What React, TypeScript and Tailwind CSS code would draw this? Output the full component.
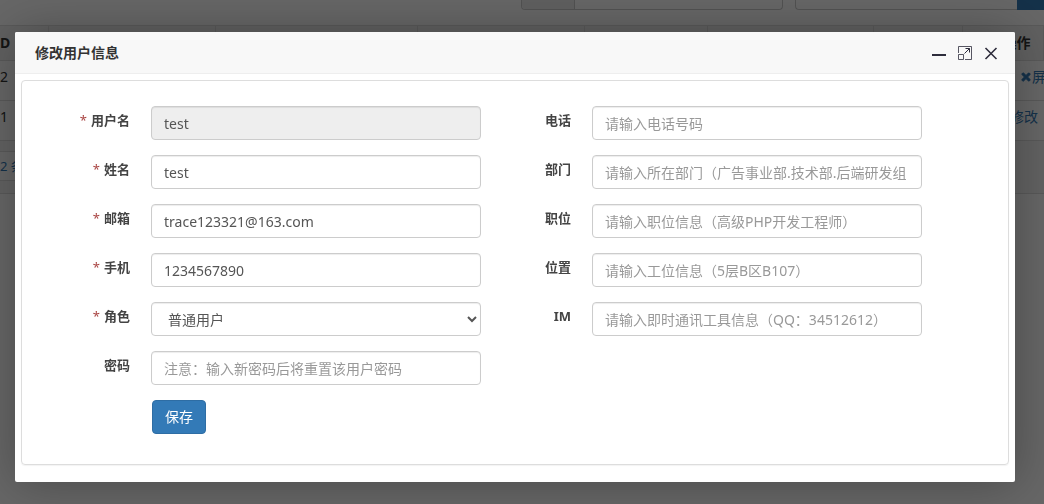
import React from 'react';
import { FaTimes } from 'react-icons/fa';

interface Field {
  id: string;
  label: string;
  required?: boolean;
  value?: string;
  placeholder?: string;
  disabled?: boolean;
  type?: 'text' | 'password' | 'select';
}

const accountFields: Field[] = [
  { id: 'username', label: '用户名', required: true, value: 'test', disabled: true },
  { id: 'name', label: '姓名', required: true, value: 'test' },
  { id: 'email', label: '邮箱', required: true, value: 'trace123321@163.com' },
  { id: 'mobile', label: '手机', required: true, value: '1234567890' },
  { id: 'role', label: '角色', required: true, type: 'select', value: '普通用户' },
  { id: 'password', label: '密码', type: 'password', placeholder: '注意：输入新密码后将重置该用户密码' },
];

const contactFields: Field[] = [
  { id: 'phone', label: '电话', placeholder: '请输入电话号码' },
  { id: 'department', label: '部门', placeholder: '请输入所在部门（广告事业部.技术部.后端研发组' },
  { id: 'position', label: '职位', placeholder: '请输入职位信息（高级PHP开发工程师）' },
  { id: 'location', label: '位置', placeholder: '请输入工位信息（5层B区B107）' },
  { id: 'im', label: 'IM', placeholder: '请输入即时通讯工具信息（QQ：34512612）' },
];

const controlClass =
  'h-[34px] w-full min-w-0 flex-1 rounded border border-[#ccc] bg-white px-3 text-sm text-[#555] placeholder:text-[#999] disabled:bg-[#eee] shadow-[inset_0_1px_1px_rgba(0,0,0,0.075)]';

const FormRow: React.FC<{ field: Field }> = ({ field }) => (
  <div className="flex">
    <label htmlFor={field.id} className="w-[111px] pr-[21px] pt-1 text-right text-[13px] leading-5 font-bold text-[#444]">
      {field.required && <span className="mr-1 font-normal text-[#a94442]">*</span>}
      {field.label}
    </label>
    {field.type === 'select' ? (
      <select id={field.id} className={controlClass} defaultValue={field.value}>
        <option>{field.value}</option>
      </select>
    ) : (
      <input
        id={field.id}
        type={field.type ?? 'text'}
        className={controlClass}
        defaultValue={field.value}
        placeholder={field.placeholder}
        disabled={field.disabled}
      />
    )}
  </div>
);

const UserListPage: React.FC = () => (
  <div className="overflow-hidden text-sm text-[#333]" aria-hidden="true">
    <div className="flex h-[25px] items-start pl-[521px]">
      <div className="flex h-[10px] w-[262px] rounded-b border border-t-0 border-[#ccc]">
        <div className="w-[53px] rounded-bl border-r border-[#ccc] bg-[#eee]" />
      </div>
      <div className="ml-3 h-[10px] w-[222px] rounded-bl border border-t-0 border-r-0 border-[#ccc]" />
      <div className="h-[10px] flex-1 bg-[#337ab7]" />
    </div>
    <table className="w-full table-fixed border-collapse">
      <colgroup>
        <col className="w-12" />
        <col className="w-[167px]" />
        <col className="w-[202px]" />
        <col className="w-[167px]" />
        <col className="w-[123px]" />
        <col className="w-[166px]" />
        <col className="w-[89px]" />
        <col />
      </colgroup>
      <thead>
        <tr className="h-[35px] bg-[#f0f0f0] text-left [&>th]:border [&>th]:border-[#ddd]">
          <th className="border-l-0!">D</th>
          <th />
          <th />
          <th />
          <th />
          <th />
          <th />
          <th className="pl-10 whitespace-nowrap">操作</th>
        </tr>
      </thead>
      <tbody className="[&_td]:pt-[6px] [&_td]:align-top">
        <tr className="h-10 border-b border-[#ddd]">
          <td colSpan={7}>2</td>
          <td className="pl-[58px] text-[#337ab7]">
            <a href="#block" className="flex items-center whitespace-nowrap">
              <FaTimes className="size-3 shrink-0" strokeWidth={40} stroke="currentColor" />
              屏蔽
            </a>
          </td>
        </tr>
        <tr className="h-10 border-b border-[#ddd]">
          <td colSpan={7}>1</td>
          <td className="pl-12 whitespace-nowrap text-[#337ab7]">
            <a href="#edit">修改</a>
          </td>
        </tr>
      </tbody>
    </table>
    <div className="h-[53px] border-b border-[#ddd] bg-[#f5f5f5] pt-[10px]">
      <div className="h-[30px] w-24 border border-l-0 border-[#ddd] bg-white text-[13px] leading-7 text-[#337ab7]">2 条</div>
    </div>
  </div>
);

const WindowButtons: React.FC = () => (
  <div className="flex items-center gap-3 text-[#2e2d3c]">
    <button type="button" aria-label="最小化">
      <svg width="14" height="14" viewBox="0 0 14 14" fill="currentColor">
        <path d="M0 8h14v2H0z" />
      </svg>
    </button>
    <button type="button" aria-label="最大化">
      <svg width="14" height="14" viewBox="0 0 14 14" fill="none" stroke="currentColor">
        <path d="M.5 7V.5h13v13H7" strokeOpacity="0.8" />
        <path d="M.5 8.5h5v5h-5z" strokeOpacity="0.8" />
        <path d="M6.5 7.5l5-5M7.5 2.5h4v4" />
      </svg>
    </button>
    <button type="button" aria-label="关闭">
      <svg width="14" height="14" viewBox="0 0 14 14" fill="none" stroke="currentColor" strokeWidth="1.6">
        <path d="M1.5 2l11 11M12.5 2l-11 11" />
      </svg>
    </button>
  </div>
);

const App: React.FC = () => (
  <div className="min-h-screen bg-white font-['Noto_Sans','Noto_Sans_CJK_SC',sans-serif]">
    <UserListPage />
    <div className="fixed inset-0 overflow-auto bg-black/60 pt-8 pr-[29px] pb-[22px] pl-[15px]">
      <div
        role="dialog"
        aria-labelledby="dialog-title"
        className="rounded-xs bg-white pb-[17px] shadow-[1px_1px_50px_rgba(0,0,0,0.3)]"
      >
        <div className="flex h-[42px] items-center justify-between rounded-t-xs border-b border-[#eee] bg-[#f8f8f8] pr-[17px] pl-5">
          <h2 id="dialog-title" className="text-sm font-bold text-[#333]">
            修改用户信息
          </h2>
          <WindowButtons />
        </div>
        <form
          className="mx-[6px] mt-[6px] rounded border border-[#ddd] pt-[25px] pr-[86px] pb-[30px] pl-[18px] shadow-[0_1px_1px_rgba(0,0,0,0.05)]"
          onSubmit={(e) => e.preventDefault()}
        >
          <div className="grid grid-cols-2">
            <div className="flex flex-col gap-[15px]">
              {accountFields.map((field) => (
                <FormRow key={field.id} field={field} />
              ))}
              <button
                type="submit"
                className="ml-28 h-[34px] self-start rounded border border-[#2e6da4] bg-[#337ab7] px-3 text-sm text-white"
              >
                保存
              </button>
            </div>
            <div className="flex flex-col gap-[15px]">
              {contactFields.map((field) => (
                <FormRow key={field.id} field={field} />
              ))}
            </div>
          </div>
        </form>
      </div>
    </div>
  </div>
);

export default App;
